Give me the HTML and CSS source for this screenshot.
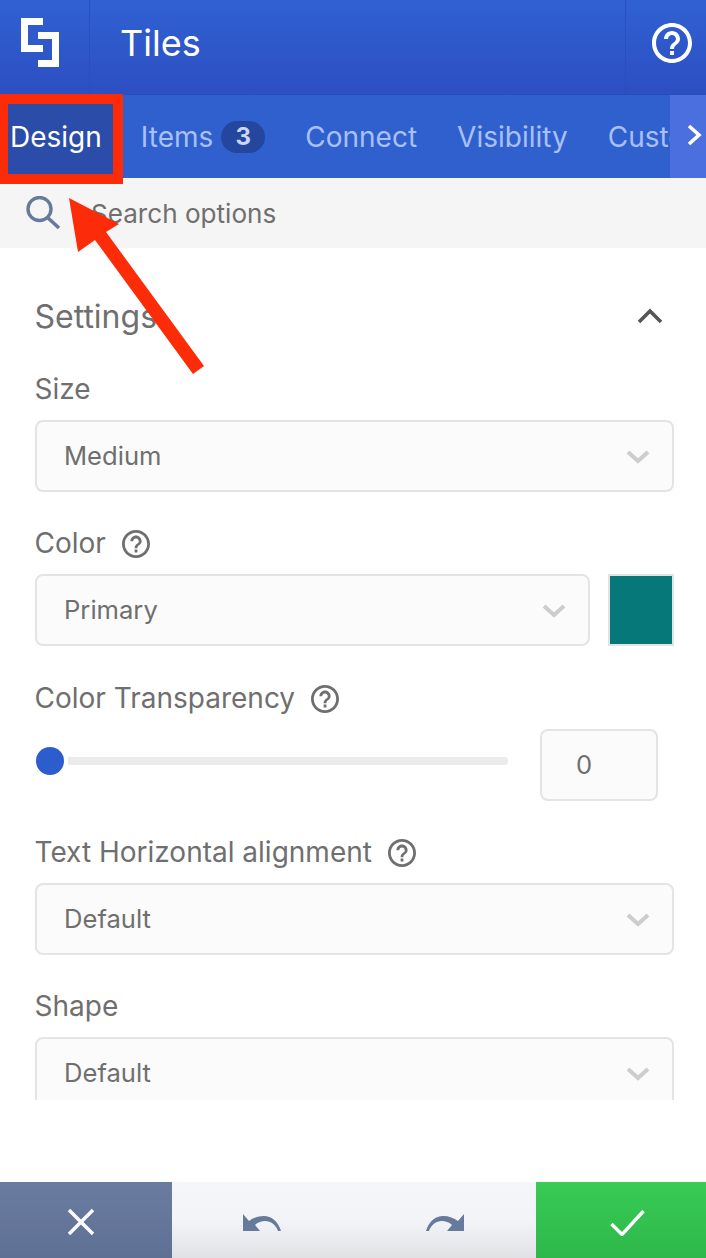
FILE: index.html
```html
<!DOCTYPE html>
<html lang="en">
<head>
<meta charset="utf-8">
<title>Tiles</title>
<link rel="stylesheet" href="styles.css">
</head>
<body>
<div class="app">
  <header class="top">
    <div class="logo-cell">
      <svg class="logo" viewBox="0 0 38 49"><path d="M0 0H22V7H7V27H22V34H0Z M17 14H38V49H17V42H31V21H17Z" fill="#fff"/></svg>
    </div>
    <h1 class="title">Tiles</h1>
    <div class="help-cell">
      <svg class="help-top" viewBox="2 2 20 20"><path fill="#fff" d="M11 18h2v-2h-2v2zm1-16C6.48 2 2 6.48 2 12s4.48 10 10 10 10-4.48 10-10S17.52 2 12 2zm0 18c-4.41 0-8-3.59-8-8s3.59-8 8-8 8 3.59 8 8-3.59 8-8 8zm0-14c-2.21 0-4 1.79-4 4h2c0-1.1.9-2 2-2s2 .9 2 2c0 2-3 1.75-3 5h2c0-2.25 3-2.5 3-5 0-2.21-1.79-4-4-4z"/></svg>
    </div>
  </header>
  <nav class="tabs">
    <div class="tab-list">
      <span class="tab tab-active">Design</span>
      <span class="tab">Items <b class="badge">3</b></span>
      <span class="tab">Connect</span>
      <span class="tab">Visibility</span>
      <span class="tab">Custom CSS</span>
    </div>
    <div class="tab-next">
      <svg class="tab-chevron" viewBox="0 0 15 22"><path d="M2 2L12 11L2 20" fill="none" stroke="#fff" stroke-width="3.6"/></svg>
    </div>
  </nav>
  <div class="search">
    <svg class="search-icon" viewBox="0 0 35 34"><circle cx="13.5" cy="13" r="11.5" fill="none" stroke="#667a9c" stroke-width="3.4"/><path d="M21.5 21.5L33 32" stroke="#667a9c" stroke-width="3.6" fill="none"/></svg>
    <span class="search-text">Search options</span>
  </div>
  <main class="panel">
    <div class="section-head">
      <h2 class="section-title">Settings</h2>
      <svg class="section-chevron" viewBox="0 0 26 16"><path d="M2 14L13 3L24 14" fill="none" stroke="#555" stroke-width="3.6"/></svg>
    </div>
    <div class="field">
      <label class="label">Size</label>
      <div class="select"><span class="value">Medium</span><svg class="select-chevron" viewBox="0 0 24 14"><path d="M2 2L12 11L22 2" fill="none" stroke="#cdcdcd" stroke-width="4"/></svg></div>
    </div>
    <div class="field field-tall">
      <label class="label">Color <svg class="help" viewBox="2 2 20 20"><use href="#q"/></svg></label>
      <div class="row">
        <div class="select select-grow"><span class="value">Primary</span><svg class="select-chevron" viewBox="0 0 24 14"><path d="M2 2L12 11L22 2" fill="none" stroke="#cdcdcd" stroke-width="4"/></svg></div>
        <div class="swatch"></div>
      </div>
    </div>
    <div class="field">
      <label class="label">Color Transparency <svg class="help" viewBox="2 2 20 20"><use href="#q"/></svg></label>
      <div class="row slider-row">
        <div class="slider"><span class="thumb"></span><span class="track"></span></div>
        <div class="number">0</div>
      </div>
    </div>
    <div class="field">
      <label class="label">Text Horizontal alignment <svg class="help" viewBox="2 2 20 20"><use href="#q"/></svg></label>
      <div class="select"><span class="value">Default</span><svg class="select-chevron" viewBox="0 0 24 14"><path d="M2 2L12 11L22 2" fill="none" stroke="#cdcdcd" stroke-width="4"/></svg></div>
    </div>
    <div class="field">
      <label class="label">Shape</label>
      <div class="select"><span class="value">Default</span><svg class="select-chevron" viewBox="0 0 24 14"><path d="M2 2L12 11L22 2" fill="none" stroke="#cdcdcd" stroke-width="4"/></svg></div>
    </div>
  </main>
  <footer class="bottom">
    <div class="btn-cancel">
      <svg class="x-icon" viewBox="0 0 28 28"><path d="M2 2L26 26M26 2L2 26" stroke="#fff" stroke-width="3.4" fill="none"/></svg>
    </div>
    <div class="history">
      <svg class="undo" viewBox="0 0 38 17"><path fill="#667a9c" d="M0 0V17H17L12 11C15 8 19 7 22 7C28 7 33 11 35 17H38C35 7 28 2 21 2C15 2 10 4 6 7Z"/></svg>
      <svg class="undo redo" viewBox="0 0 38 17"><path fill="#667a9c" d="M0 0V17H17L12 11C15 8 19 7 22 7C28 7 33 11 35 17H38C35 7 28 2 21 2C15 2 10 4 6 7Z"/></svg>
    </div>
    <div class="btn-ok">
      <svg class="check-icon" viewBox="0 0 35 26"><path d="M1.5 14L12 24.5L33.5 1" stroke="#fff" stroke-width="3.4" fill="none"/></svg>
    </div>
  </footer>
  <div class="callout-box"></div>
  <svg class="callout-arrow" viewBox="0 0 706 400"><path fill="#fb2c07" d="M69 198L119 224L106 232L204 366L193 374L95 240L78 252Z"/></svg>
  <svg class="defs" width="0" height="0"><defs><path id="q" fill="#6f6f6f" d="M11 18h2v-2h-2v2zm1-16C6.48 2 2 6.48 2 12s4.48 10 10 10 10-4.48 10-10S17.52 2 12 2zm0 18c-4.41 0-8-3.59-8-8s3.59-8 8-8 8 3.59 8 8-3.59 8-8 8zm0-14c-2.21 0-4 1.79-4 4h2c0-1.1.9-2 2-2s2 .9 2 2c0 2-3 1.75-3 5h2c0-2.25 3-2.5 3-5 0-2.21-1.79-4-4-4z"/></defs></svg>
</div>
</body>
</html>
```
FILE: styles.css
```css
* { box-sizing: border-box; }
html, body { margin: 0; padding: 0; }
body { font-family: Inter, "Liberation Sans", sans-serif; color: #6f6f6f; background: #fff; }
.app { position: relative; width: 706px; height: 1258px; display: flex; flex-direction: column; overflow: hidden; }

.top { height: 95px; flex: none; display: flex; align-items: stretch; background: linear-gradient(180deg, #3061d2 0%, #2c4fc2 100%); border-bottom: 1px solid #2a4db9; }
.logo-cell { width: 90px; flex: none; padding: 18px 0 0 21px; border-right: 1px solid #2a4fbc; }
.logo { display: block; width: 38px; height: 49px; }
.title { margin: 0 0 0 30px; flex: 1; font-size: 36px; font-weight: 400; line-height: 87px; color: #fff; }
.help-cell { width: 81px; flex: none; display: flex; justify-content: flex-end; align-items: flex-start; padding: 23px 14px 0 0; border-left: 1px solid #2a4fbc; }
.help-top { display: block; width: 40px; height: 40px; }

.tabs { height: 83px; flex: none; display: flex; background: #2f60ce; }
.tab-list { flex: 1; min-width: 0; display: flex; overflow: hidden; white-space: nowrap; }
.tab { flex: none; display: flex; align-items: center; gap: 8px; padding: 0 20px; font-size: 28px; color: #a9c0f5; height: 83px; }
.tab-active { padding: 0 19px 0 10px; color: #fff; background: #2b4ca8; }
.badge { display: inline-flex; justify-content: center; align-items: center; width: 44px; height: 32px; border-radius: 16px; background: #24469e; color: #c9d6f6; font-size: 24px; font-weight: 700; }
.tab-next { width: 36px; flex: none; background: #4c6fdf; padding: 29px 0 0 17px; }
.tab-chevron { display: block; width: 15px; height: 22px; }

.search { height: 70px; flex: none; display: flex; align-items: center; background: #f6f5f5; padding-left: 26px; }
.search-icon { display: block; width: 35px; height: 34px; flex: none; }
.search-text { margin-left: 30px; font-size: 26.1px; color: #6f6f6f; }

.panel { height: 852px; flex: none; overflow: hidden; padding: 0 32px 0 35px; }
.section-head { height: 122px; margin-bottom: 1px; display: flex; justify-content: space-between; align-items: flex-start; padding: 49px 11px 0 0; }
.section-title { margin: 0 0 0 -0.5px; font-size: 32px; font-weight: 400; line-height: 40px; color: #6f6f6f; }
.section-chevron { display: block; width: 26px; height: 16px; margin-top: 11px; }

.field { margin-bottom: 33px; }
.field-tall { margin-bottom: 34px; }
.label { display: flex; align-items: center; gap: 16px; height: 37px; margin-bottom: 12px; margin-left: -0.5px; font-size: 28px; line-height: 37px; }
.help { display: block; width: 28px; height: 28px; flex: none; }
.row { display: flex; gap: 18px; }
.select { height: 72px; display: flex; justify-content: space-between; align-items: center; padding: 0 22px 0 27px; background: #fbfbfb; border: 2px solid #e4e4e4; border-radius: 8px; font-size: 25.6px; }
.value { padding-bottom: 2px; }
.select-grow { flex: 1; min-width: 0; }
.select-chevron { display: block; width: 24px; height: 14px; flex: none; margin-top: 2px; }
.swatch { width: 66px; height: 72px; flex: none; background: #06787a; border: 2px solid #dfe5e5; }

.slider-row { gap: 32px; height: 72px; padding-right: 16px; }
.slider { flex: 1; display: flex; align-items: center; gap: 4px; padding-left: 1px; height: 64px; }
.thumb { width: 28px; height: 28px; flex: none; border-radius: 50%; background: #2d5ccd; }
.track { flex: 1; height: 8px; background: #ebebeb; border-radius: 0 4px 4px 0; }
.number { width: 118px; height: 72px; flex: none; padding-left: 34px; line-height: 68px; background: #fbfbfb; border: 2px solid #e4e4e4; border-radius: 8px; font-size: 25.6px; }

.bottom { margin-top: auto; height: 76px; flex: none; display: flex; }
.btn-cancel { width: 172px; flex: none; display: flex; justify-content: center; padding: 26px 10px 0 0; background: linear-gradient(180deg, #6a7c9f 0%, #5f7095 100%); }
.x-icon { display: block; width: 28px; height: 28px; }
.history { flex: 1; display: flex; justify-content: flex-start; gap: 145px; padding: 32px 0 0 71px; background: linear-gradient(180deg, #f4f6fa 0%, #f2f4f8 50%, #e1e2e4 100%); }
.undo { display: block; width: 38px; height: 17px; }
.redo { transform: scaleX(-1); }
.btn-ok { width: 170px; flex: none; padding: 28px 0 0 74px; background: linear-gradient(180deg, #38cb55 0%, #2eb84b 100%); }
.check-icon { display: block; width: 35px; height: 26px; }

.callout-box { position: absolute; left: 0; top: 94px; width: 123px; height: 90px; border: solid #fb2c07; border-width: 10px 10px 10px 8px; }
.callout-arrow { position: absolute; left: 0; top: 0; width: 706px; height: 400px; }
.defs { position: absolute; }
```
